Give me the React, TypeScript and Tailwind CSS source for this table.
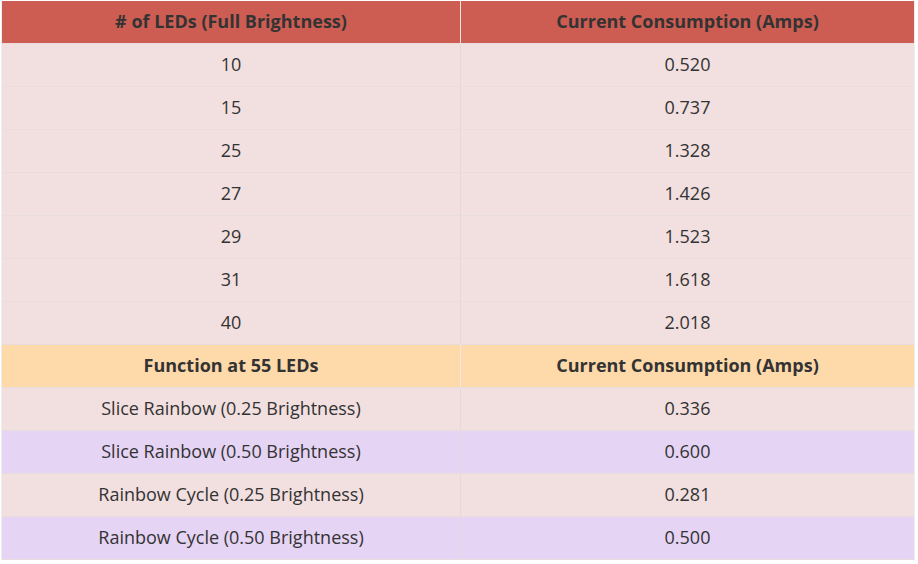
const top = [
  ["10", "0.520"],
  ["15", "0.737"],
  ["25", "1.328"],
  ["27", "1.426"],
  ["29", "1.523"],
  ["31", "1.618"],
  ["40", "2.018"],
];

const bottom = [
  ["Slice Rainbow (0.25 Brightness)", "0.336", "bg-[#f2dfdf]"],
  ["Slice Rainbow (0.50 Brightness)", "0.600", "bg-[#e6d4f5]"],
  ["Rainbow Cycle (0.25 Brightness)", "0.281", "bg-[#f2dfdf]"],
  ["Rainbow Cycle (0.50 Brightness)", "0.500", "bg-[#e6d4f5]"],
];

function Row({ a, b, bg, head }: { a: string; b: string; bg: string; head?: boolean }) {
  return (
    <div className={`grid h-[43px] grid-cols-[459px_1fr] border-b border-[#e9dcdc] ${bg}`}>
      <div
        className={`flex items-center justify-center border-r pb-[2px] ${
          head ? "border-[#f0e8e4] font-bold" : "border-[#e6d8d8]"
        }`}
      >
        {a}
      </div>
      <div className={`flex items-center justify-center pb-[2px] ${head ? "font-bold" : ""}`}>{b}</div>
    </div>
  );
}

export default function App() {
  return (
    <div className="h-[564px] w-[918px] bg-white pl-px pt-px font-['Open_Sans',sans-serif] text-[18px] text-[#333]">
      <div className="w-[914px] border-l border-r border-[#eee]">
        <Row a="# of LEDs (Full Brightness)" b="Current Consumption (Amps)" bg="bg-[#cd5d52]" head />
        {top.map(([a, b]) => (
          <Row key={a} a={a} b={b} bg="bg-[#f2dfdf]" />
        ))}
        <Row a="Function at 55 LEDs" b="Current Consumption (Amps)" bg="bg-[#fed9a9]" head />
        {bottom.map(([a, b, bg]) => (
          <Row key={a} a={a} b={b} bg={bg} />
        ))}
      </div>
    </div>
  );
}
